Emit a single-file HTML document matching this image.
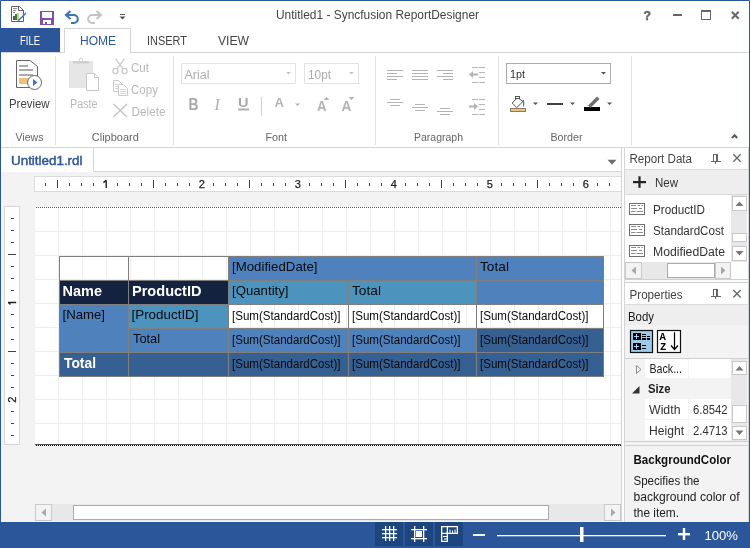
<!DOCTYPE html>
<html><head><meta charset="utf-8"><title>ReportDesigner</title>
<style>html,body{margin:0;padding:0;width:750px;height:548px;overflow:hidden;background:#fff}svg{display:block;will-change:transform}text{font-family:"Liberation Sans",sans-serif}</style>
</head><body>
<svg width="750" height="548" viewBox="0 0 750 548" shape-rendering="auto">
<rect x="0" y="0" width="750" height="548" fill="#fff"/>
<text x="276" y="19" font-size="12" fill="#444" textLength="203" lengthAdjust="spacingAndGlyphs">Untitled1 - Syncfusion ReportDesigner</text>
<g fill="none" stroke="#5f5f5f" stroke-width="1">
<path d="M11.5 6.5 H19.5 L23.5 10.5 V21.5 H11.5 Z"/>
<path d="M18.5 6.5 V10.5 H23.5"/>
</g>
<g fill="#8a8a8a"><rect x="13" y="8" width="4" height="1"/><rect x="13" y="10" width="3" height="1"/><rect x="13" y="12" width="2" height="1"/></g>
<rect x="13" y="16" width="2" height="4" fill="#595959"/>
<rect x="15" y="14" width="2" height="6" fill="#1e8c45"/>
<rect x="17" y="13" width="2" height="7" fill="#f2bf6f"/>
<path d="M18 21 L26 13" stroke="#3b7bc8" stroke-width="1.6"/>

<rect x="40" y="11" width="14" height="14" fill="#8350a5"/>
<rect x="42" y="12" width="10" height="6" fill="#fff"/>
<rect x="43" y="20" width="8" height="4" fill="#fff"/>
<rect x="45" y="22" width="2" height="2" fill="#8350a5"/>
<path d="M70.5 11 L66 15 L70.5 19 M66.5 15 H73.8 A4 4 0 0 1 73.8 23 H71" fill="none" stroke="#3a74b4" stroke-width="2.1"/>
<path d="M96.5 11 L101 15 L96.5 19 M100.5 15 H92.2 A4 4 0 0 0 92.2 23 H95" fill="none" stroke="#c4c4c4" stroke-width="2.1"/>
<rect x="120" y="14" width="5" height="1" fill="#555"/>
<path d="M119.5 16.5 H125.5 L122.5 19.5 Z" fill="#555"/>
<text x="643.5" y="20" font-size="13.5" fill="#666" textLength="7.5" lengthAdjust="spacingAndGlyphs" font-weight="bold" stroke="#666" stroke-width="0.5">?</text>
<rect x="673" y="14" width="9" height="2" fill="#666"/>
<rect x="701.5" y="10.5" width="9" height="9" fill="none" stroke="#666"/><rect x="701" y="10" width="10" height="2" fill="#666"/>
<path d="M731.8 11.8 L738.7 18.7 M738.7 11.8 L731.8 18.7" stroke="#666" stroke-width="2"/>
<rect x="1" y="28" width="59" height="25" fill="#2b579a"/>
<text x="20" y="45" font-size="12" fill="#fff" textLength="20" lengthAdjust="spacingAndGlyphs">FILE</text>
<path d="M64.5 53 V28.5 H130.5 V53" fill="#fff" stroke="#d5d5d5"/>
<text x="80" y="45" font-size="12" fill="#2b579a" textLength="36" lengthAdjust="spacingAndGlyphs">HOME</text>
<text x="147" y="45" font-size="12" fill="#444" textLength="40" lengthAdjust="spacingAndGlyphs">INSERT</text>
<text x="218" y="45" font-size="12" fill="#444" textLength="31" lengthAdjust="spacingAndGlyphs">VIEW</text>
<rect x="1" y="52" width="64" height="1" fill="#d5d5d5"/>
<rect x="130" y="52" width="619" height="1" fill="#d5d5d5"/>
<rect x="1" y="147" width="748" height="1" fill="#d5d5d5"/>
<rect x="55" y="56" width="1" height="89" fill="#e1e1e1"/>
<rect x="173" y="56" width="1" height="89" fill="#e1e1e1"/>
<rect x="375" y="56" width="1" height="89" fill="#e1e1e1"/>
<rect x="498" y="56" width="1" height="89" fill="#e1e1e1"/>
<rect x="631" y="56" width="1" height="89" fill="#e1e1e1"/>
<text x="15.5" y="141" font-size="11.5" fill="#666" textLength="28" lengthAdjust="spacingAndGlyphs">Views</text>
<text x="91.8" y="141" font-size="11.5" fill="#666" textLength="47" lengthAdjust="spacingAndGlyphs">Clipboard</text>
<text x="265.5" y="141" font-size="11.5" fill="#666" textLength="21.5" lengthAdjust="spacingAndGlyphs">Font</text>
<text x="414" y="141" font-size="11.5" fill="#666" textLength="49" lengthAdjust="spacingAndGlyphs">Paragraph</text>
<text x="550.5" y="141" font-size="11.5" fill="#666" textLength="32" lengthAdjust="spacingAndGlyphs">Border</text>
<path d="M732 138 L734.6 135.3 L737.2 138" fill="none" stroke="#5a5a5a" stroke-width="2.1"/>
<path d="M16.5 60.5 H30 L37.5 66.5 V87.5 H16.5 Z" fill="#fff" stroke="#666"/>
<g fill="#ababab"><rect x="19" y="65" width="9" height="2"/><rect x="19" y="69" width="14" height="2"/><rect x="19" y="74" width="14" height="2"/></g>
<rect x="19" y="78" width="10" height="6" fill="#efc27c"/>
<circle cx="34.5" cy="82.5" r="7" fill="#fff" stroke="#666"/>
<path d="M33 79 L37.5 82.5 L33 86 Z" fill="#3b78b8"/>
<text x="9" y="108" font-size="12" fill="#444" textLength="40.5" lengthAdjust="spacingAndGlyphs">Preview</text>
<rect x="69" y="61" width="24" height="27" fill="#e6e6e6"/>
<rect x="73" y="61" width="16" height="2.5" fill="#cfcfcf"/>
<circle cx="81" cy="60" r="1.8" fill="none" stroke="#cfcfcf"/>
<path d="M86.5 73.5 H94.5 L98.5 77.5 V90.5 H86.5 Z" fill="#fff" stroke="#c8c8c8"/>
<path d="M94.5 73.5 V77.5 H98.5" fill="none" stroke="#c8c8c8"/>
<text x="70" y="108" font-size="12" fill="#b9b9b9" textLength="27.5" lengthAdjust="spacingAndGlyphs">Paste</text>
<g fill="none" stroke="#c8c8c8" stroke-width="1.2">
<circle cx="115.5" cy="71" r="2.6"/><circle cx="124.5" cy="71" r="2.6"/>
<path d="M117 68.8 L124.5 58.5 M123 68.8 L115.5 58.5"/></g>
<text x="131" y="72" font-size="12" fill="#b9b9b9" textLength="18" lengthAdjust="spacingAndGlyphs">Cut</text>
<g fill="#fff" stroke="#cacaca" stroke-width="1">
<path d="M113.5 80.5 H118.5 L121.5 83.5 V91.5 H113.5 Z"/>
<path d="M118.5 84.5 H123.5 L127.5 88.5 V95.5 H118.5 Z"/></g>
<g fill="#d8d8d8"><rect x="115" y="84" width="4" height="1"/><rect x="115" y="86" width="3" height="1"/><rect x="115" y="88" width="3" height="1"/>
<rect x="120" y="89" width="6" height="1"/><rect x="120" y="91" width="6" height="1"/><rect x="120" y="93" width="6" height="1"/></g>
<text x="131" y="93.5" font-size="12" fill="#b9b9b9" textLength="27" lengthAdjust="spacingAndGlyphs">Copy</text>
<path d="M113.5 104 L127 117 M127 104 L113.5 117" stroke="#c4c4c4" stroke-width="1.4"/>
<text x="131.5" y="116" font-size="12" fill="#b9b9b9" textLength="34" lengthAdjust="spacingAndGlyphs">Delete</text>
<rect x="181.5" y="63.5" width="114" height="20" fill="#fff" stroke="#e3e3e3" stroke-width="1"/>
<text x="184.5" y="79" font-size="12" fill="#adadad" textLength="25" lengthAdjust="spacingAndGlyphs">Arial</text>
<path d="M286 72 H291 L288.5 74.5 Z" fill="#c6c6c6"/>
<rect x="304.5" y="63.5" width="54" height="20" fill="#fff" stroke="#e3e3e3" stroke-width="1"/>
<text x="308" y="79" font-size="12" fill="#adadad" textLength="23" lengthAdjust="spacingAndGlyphs">10pt</text>
<path d="M349 72 H354 L351.5 74.5 Z" fill="#c6c6c6"/>
<text x="188.5" y="109.6" font-size="16.5" fill="#a9a9a9" textLength="10" lengthAdjust="spacingAndGlyphs" font-weight="bold">B</text>
<text x="214.5" y="109.5" font-size="16" fill="#b0b0b0" style="font-family:Liberation Serif;font-style:italic">I</text>
<text x="238" y="107" font-size="13.5" fill="#a9a9a9" textLength="10.5" lengthAdjust="spacingAndGlyphs" font-weight="bold">U</text>
<rect x="238" y="108.5" width="11" height="2" fill="#b0b0b0"/>
<rect x="261" y="97" width="1" height="19" fill="#d0d0d0"/>
<text x="274.5" y="106.8" font-size="13.5" fill="#b4b4b4" textLength="9.5" lengthAdjust="spacingAndGlyphs" font-weight="bold">A</text>
<path d="M295 103.5 H300 L297.5 106 Z" fill="#b0b0b0"/>
<text x="317" y="111" font-size="14.5" fill="#b4b4b4" textLength="9.5" lengthAdjust="spacingAndGlyphs" font-weight="bold">A</text>
<path d="M323.5 100 L326.5 97 L329.5 100 Z" fill="#b4b4b4"/>
<text x="341.5" y="111" font-size="14.5" fill="#b4b4b4" textLength="10" lengthAdjust="spacingAndGlyphs" font-weight="bold">A</text>
<path d="M348.5 97 L351.5 100 L354.5 97 Z" fill="#b4b4b4"/>
<rect x="387" y="70" width="16" height="1" fill="#b4b4b4"/>
<rect x="387" y="73" width="10" height="1" fill="#b4b4b4"/>
<rect x="387" y="76" width="16" height="1" fill="#b4b4b4"/>
<rect x="387" y="79" width="10" height="1" fill="#b4b4b4"/>
<rect x="412" y="70" width="16" height="1" fill="#b4b4b4"/>
<rect x="412" y="73" width="16" height="1" fill="#b4b4b4"/>
<rect x="412" y="76" width="16" height="1" fill="#b4b4b4"/>
<rect x="412" y="79" width="16" height="1" fill="#b4b4b4"/>
<rect x="437" y="70" width="16" height="1" fill="#b4b4b4"/>
<rect x="443" y="73" width="10" height="1" fill="#b4b4b4"/>
<rect x="437" y="76" width="16" height="1" fill="#b4b4b4"/>
<rect x="443" y="79" width="10" height="1" fill="#b4b4b4"/>
<rect x="390" y="99" width="10" height="1" fill="#b4b4b4"/>
<rect x="387" y="102" width="16" height="1" fill="#b4b4b4"/>
<rect x="390" y="105" width="10" height="1" fill="#b4b4b4"/>
<rect x="415" y="104" width="10" height="1" fill="#b4b4b4"/>
<rect x="412" y="107" width="16" height="1" fill="#b4b4b4"/>
<rect x="415" y="110" width="10" height="1" fill="#b4b4b4"/>
<rect x="440" y="108" width="10" height="1" fill="#b4b4b4"/>
<rect x="437" y="111" width="16" height="1" fill="#b4b4b4"/>
<rect x="440" y="114" width="10" height="1" fill="#b4b4b4"/>
<rect x="472" y="67" width="6" height="1" fill="#b4b4b4"/>
<rect x="479" y="67" width="6" height="1" fill="#b4b4b4"/>
<rect x="479" y="72" width="6" height="1" fill="#b4b4b4"/>
<rect x="479" y="77" width="6" height="1" fill="#b4b4b4"/>
<rect x="472" y="82" width="6" height="1" fill="#b4b4b4"/>
<rect x="479" y="82" width="6" height="1" fill="#b4b4b4"/>
<path d="M469 74.5 L473 71 V73.5 H478 V75.5 H473 V78 Z" fill="#b4b4b4"/>
<rect x="472" y="99" width="6" height="1" fill="#b4b4b4"/>
<rect x="479" y="99" width="6" height="1" fill="#b4b4b4"/>
<rect x="479" y="104" width="6" height="1" fill="#b4b4b4"/>
<rect x="479" y="109" width="6" height="1" fill="#b4b4b4"/>
<rect x="472" y="114" width="6" height="1" fill="#b4b4b4"/>
<rect x="479" y="114" width="6" height="1" fill="#b4b4b4"/>
<path d="M478 106.5 L474 103 V105.5 H469 V107.5 H474 V110 Z" fill="#b4b4b4"/>
<rect x="506.5" y="63.5" width="104" height="20" fill="#fff" stroke="#ababab" stroke-width="1"/>
<text x="510" y="78" font-size="11.5" fill="#333" textLength="15" lengthAdjust="spacingAndGlyphs">1pt</text>
<path d="M601 72 H606 L603.5 74.5 Z" fill="#555"/>
<rect x="510.5" y="108.5" width="15" height="3" fill="#f0c27a" stroke="#8a7a66"/>
<path d="M512.2 103 L517.5 97.5 L523 101.5 L516.7 107.6 Z" fill="#fff" stroke="#555"/>
<rect x="515.5" y="96.5" width="4" height="2" fill="#fff" stroke="#555"/>
<path d="M523 100 Q524 101 523.5 106.5" fill="none" stroke="#3b7bc8" stroke-width="1.3"/>
<path d="M533 102.5 H538 L535.5 105 Z" fill="#555"/>
<rect x="547" y="103" width="16" height="2" fill="#444"/>
<path d="M570 102.5 H575 L572.5 105 Z" fill="#555"/>
<rect x="584" y="107" width="16" height="4" fill="#000"/>
<path d="M588 105.5 L597 96.5 L599.5 99 L590.5 108 Z" fill="#707070"/>
<path d="M586 106 L588 105.5 L588.5 106" fill="#707070"/>
<path d="M607 102.5 H612 L609.5 105 Z" fill="#555"/>
<rect x="93" y="148" width="1" height="24" fill="#d5d5d5"/>
<rect x="93" y="171" width="529" height="1" fill="#d5d5d5"/>
<rect x="621" y="148" width="1" height="24" fill="#d5d5d5"/>
<text x="11" y="165" font-size="13" fill="#2b579a" textLength="71.5" lengthAdjust="spacingAndGlyphs" stroke="#2b579a" stroke-width="0.45">Untitled1.rdl</text>
<path d="M607.5 159.7 H616.5 L612 164.7 Z" fill="#707070"/>
<rect x="1" y="172" width="622" height="350" fill="#f3f3f3"/>
<rect x="622" y="148" width="2" height="374" fill="#fff"/>
<rect x="34" y="176" width="588" height="16" fill="#fff"/>
<rect x="34" y="176" width="588" height="1" fill="#dcdcdc"/>
<rect x="34" y="191" width="588" height="1" fill="#dcdcdc"/>
<rect x="34" y="176" width="1" height="16" fill="#dcdcdc"/>
<rect x="45" y="183" width="1" height="3" fill="#444"/>
<rect x="57" y="180" width="1" height="8" fill="#444"/>
<rect x="69" y="183" width="1" height="3" fill="#444"/>
<rect x="81" y="183" width="1" height="3" fill="#444"/>
<rect x="93" y="183" width="1" height="3" fill="#444"/>
<path d="M106.2 180.3 V188 M103.4 182.6 L106.2 180.3" fill="none" stroke="#222" stroke-width="1.4"/>
<rect x="117" y="183" width="1" height="3" fill="#444"/>
<rect x="129" y="183" width="1" height="3" fill="#444"/>
<rect x="141" y="183" width="1" height="3" fill="#444"/>
<rect x="153" y="180" width="1" height="8" fill="#444"/>
<rect x="165" y="183" width="1" height="3" fill="#444"/>
<rect x="177" y="183" width="1" height="3" fill="#444"/>
<rect x="189" y="183" width="1" height="3" fill="#444"/>
<text x="201.7" y="188" font-size="11" fill="#222" text-anchor="middle" stroke="#222" stroke-width="0.25">2</text>
<rect x="213" y="183" width="1" height="3" fill="#444"/>
<rect x="225" y="183" width="1" height="3" fill="#444"/>
<rect x="237" y="183" width="1" height="3" fill="#444"/>
<rect x="249" y="180" width="1" height="8" fill="#444"/>
<rect x="261" y="183" width="1" height="3" fill="#444"/>
<rect x="273" y="183" width="1" height="3" fill="#444"/>
<rect x="285" y="183" width="1" height="3" fill="#444"/>
<text x="297.7" y="188" font-size="11" fill="#222" text-anchor="middle" stroke="#222" stroke-width="0.25">3</text>
<rect x="309" y="183" width="1" height="3" fill="#444"/>
<rect x="321" y="183" width="1" height="3" fill="#444"/>
<rect x="333" y="183" width="1" height="3" fill="#444"/>
<rect x="345" y="180" width="1" height="8" fill="#444"/>
<rect x="357" y="183" width="1" height="3" fill="#444"/>
<rect x="369" y="183" width="1" height="3" fill="#444"/>
<rect x="381" y="183" width="1" height="3" fill="#444"/>
<text x="393.7" y="188" font-size="11" fill="#222" text-anchor="middle" stroke="#222" stroke-width="0.25">4</text>
<rect x="405" y="183" width="1" height="3" fill="#444"/>
<rect x="417" y="183" width="1" height="3" fill="#444"/>
<rect x="429" y="183" width="1" height="3" fill="#444"/>
<rect x="441" y="180" width="1" height="8" fill="#444"/>
<rect x="453" y="183" width="1" height="3" fill="#444"/>
<rect x="465" y="183" width="1" height="3" fill="#444"/>
<rect x="477" y="183" width="1" height="3" fill="#444"/>
<text x="489.7" y="188" font-size="11" fill="#222" text-anchor="middle" stroke="#222" stroke-width="0.25">5</text>
<rect x="501" y="183" width="1" height="3" fill="#444"/>
<rect x="513" y="183" width="1" height="3" fill="#444"/>
<rect x="525" y="183" width="1" height="3" fill="#444"/>
<rect x="537" y="180" width="1" height="8" fill="#444"/>
<rect x="549" y="183" width="1" height="3" fill="#444"/>
<rect x="561" y="183" width="1" height="3" fill="#444"/>
<rect x="573" y="183" width="1" height="3" fill="#444"/>
<text x="585.7" y="188" font-size="11" fill="#222" text-anchor="middle" stroke="#222" stroke-width="0.25">6</text>
<rect x="597" y="183" width="1" height="3" fill="#444"/>
<rect x="609" y="183" width="1" height="3" fill="#444"/>
<rect x="4" y="206" width="16" height="239" fill="#fff"/>
<rect x="4.5" y="206.5" width="15" height="238" fill="none" stroke="#d8d8d8" stroke-width="1"/>
<rect x="11" y="218" width="3" height="1" fill="#444"/>
<rect x="11" y="230" width="3" height="1" fill="#444"/>
<rect x="11" y="242" width="3" height="1" fill="#444"/>
<rect x="8" y="254" width="8" height="1" fill="#444"/>
<rect x="11" y="266" width="3" height="1" fill="#444"/>
<rect x="11" y="278" width="3" height="1" fill="#444"/>
<rect x="11" y="290" width="3" height="1" fill="#444"/>
<path d="M8 302.5 H16.2 M8.3 302.6 L10.5 304.6" fill="none" stroke="#222" stroke-width="1.3"/>
<rect x="11" y="314" width="3" height="1" fill="#444"/>
<rect x="11" y="327" width="3" height="1" fill="#444"/>
<rect x="11" y="339" width="3" height="1" fill="#444"/>
<rect x="8" y="351" width="8" height="1" fill="#444"/>
<rect x="11" y="363" width="3" height="1" fill="#444"/>
<rect x="11" y="375" width="3" height="1" fill="#444"/>
<rect x="11" y="387" width="3" height="1" fill="#444"/>
<text x="0" y="0" font-size="11" fill="#222" text-anchor="middle" stroke="#222" stroke-width="0.25" transform="translate(16 399.7) rotate(-90)">2</text>
<rect x="11" y="411" width="3" height="1" fill="#444"/>
<rect x="11" y="423" width="3" height="1" fill="#444"/>
<rect x="11" y="435" width="3" height="1" fill="#444"/>
<rect x="35" y="207" width="587" height="238" fill="#fff"/>
<rect x="58" y="208" width="1" height="236" fill="#ededed"/>
<rect x="82" y="208" width="1" height="236" fill="#ededed"/>
<rect x="106" y="208" width="1" height="236" fill="#ededed"/>
<rect x="130" y="208" width="1" height="236" fill="#ededed"/>
<rect x="154" y="208" width="1" height="236" fill="#ededed"/>
<rect x="178" y="208" width="1" height="236" fill="#ededed"/>
<rect x="202" y="208" width="1" height="236" fill="#ededed"/>
<rect x="226" y="208" width="1" height="236" fill="#ededed"/>
<rect x="250" y="208" width="1" height="236" fill="#ededed"/>
<rect x="274" y="208" width="1" height="236" fill="#ededed"/>
<rect x="298" y="208" width="1" height="236" fill="#ededed"/>
<rect x="322" y="208" width="1" height="236" fill="#ededed"/>
<rect x="346" y="208" width="1" height="236" fill="#ededed"/>
<rect x="370" y="208" width="1" height="236" fill="#ededed"/>
<rect x="394" y="208" width="1" height="236" fill="#ededed"/>
<rect x="418" y="208" width="1" height="236" fill="#ededed"/>
<rect x="442" y="208" width="1" height="236" fill="#ededed"/>
<rect x="466" y="208" width="1" height="236" fill="#ededed"/>
<rect x="490" y="208" width="1" height="236" fill="#ededed"/>
<rect x="514" y="208" width="1" height="236" fill="#ededed"/>
<rect x="538" y="208" width="1" height="236" fill="#ededed"/>
<rect x="562" y="208" width="1" height="236" fill="#ededed"/>
<rect x="586" y="208" width="1" height="236" fill="#ededed"/>
<rect x="610" y="208" width="1" height="236" fill="#ededed"/>
<rect x="35" y="231" width="587" height="1" fill="#ededed"/>
<rect x="35" y="255" width="587" height="1" fill="#ededed"/>
<rect x="35" y="279" width="587" height="1" fill="#ededed"/>
<rect x="35" y="303" width="587" height="1" fill="#ededed"/>
<rect x="35" y="327" width="587" height="1" fill="#ededed"/>
<rect x="35" y="351" width="587" height="1" fill="#ededed"/>
<rect x="35" y="375" width="587" height="1" fill="#ededed"/>
<rect x="35" y="399" width="587" height="1" fill="#ededed"/>
<rect x="35" y="423" width="587" height="1" fill="#ededed"/>
<line x1="36" y1="207.5" x2="622" y2="207.5" stroke="#5a5a5a" stroke-dasharray="1 1"/>
<rect x="35" y="444" width="586" height="1" fill="#505050"/>
<line x1="36" y1="445.5" x2="621" y2="445.5" stroke="#000" stroke-dasharray="1 1"/>
<rect x="621" y="148" width="1" height="374" fill="#d5d5d5"/>
<rect x="228" y="256" width="248" height="24" fill="#4f81bd"/>
<rect x="476" y="256" width="127" height="48" fill="#4f81bd"/>
<rect x="59" y="280" width="69" height="24" fill="#13233f"/>
<rect x="128" y="280" width="100" height="24" fill="#13233f"/>
<rect x="228" y="280" width="120" height="24" fill="#4c93bd"/>
<rect x="348" y="280" width="128" height="24" fill="#4c93bd"/>
<rect x="59" y="304" width="69" height="48" fill="#4f81bd"/>
<rect x="128" y="304" width="100" height="24" fill="#4c93bd"/>
<rect x="128" y="328" width="100" height="24" fill="#4f81bd"/>
<rect x="228" y="328" width="120" height="24" fill="#4f81bd"/>
<rect x="348" y="328" width="128" height="24" fill="#4f81bd"/>
<rect x="476" y="328" width="127" height="24" fill="#366092"/>
<rect x="59" y="352" width="544" height="24" fill="#366092"/>
<g fill="none" stroke="#7f7f7f" stroke-width="1">
<rect x="59.5" y="256.5" width="544" height="120"/>
</g>
<rect x="59" y="280" width="545" height="1" fill="#7f7f7f"/>
<rect x="59" y="304" width="545" height="1" fill="#7f7f7f"/>
<rect x="128" y="328" width="476" height="1" fill="#7f7f7f"/>
<rect x="59" y="352" width="545" height="1" fill="#7f7f7f"/>
<rect x="128" y="256" width="1" height="121" fill="#7f7f7f"/>
<rect x="228" y="256" width="1" height="121" fill="#7f7f7f"/>
<rect x="348" y="280" width="1" height="97" fill="#7f7f7f"/>
<rect x="476" y="256" width="1" height="121" fill="#7f7f7f"/>
<text x="232" y="270.5" font-size="13" fill="#0a0a0a" textLength="85.5" lengthAdjust="spacingAndGlyphs">[ModifiedDate]</text>
<text x="480" y="270.5" font-size="13" fill="#0a0a0a" textLength="29" lengthAdjust="spacingAndGlyphs">Total</text>
<text x="62.5" y="295.5" font-size="14" fill="#fff" textLength="39.5" lengthAdjust="spacingAndGlyphs" font-weight="bold">Name</text>
<text x="132" y="295.5" font-size="14" fill="#fff" textLength="69.5" lengthAdjust="spacingAndGlyphs" font-weight="bold">ProductID</text>
<text x="232" y="294.5" font-size="13" fill="#0a0a0a" textLength="56.5" lengthAdjust="spacingAndGlyphs">[Quantity]</text>
<text x="352" y="294.5" font-size="13" fill="#0a0a0a" textLength="29" lengthAdjust="spacingAndGlyphs">Total</text>
<text x="62.5" y="318.6" font-size="13" fill="#0a0a0a" textLength="42.5" lengthAdjust="spacingAndGlyphs">[Name]</text>
<text x="131.5" y="318.6" font-size="13" fill="#0a0a0a" textLength="67" lengthAdjust="spacingAndGlyphs">[ProductID]</text>
<text x="232" y="319.8" font-size="12" fill="#0a0a0a" textLength="108.5" lengthAdjust="spacingAndGlyphs">[Sum(StandardCost)]</text>
<text x="232" y="343.8" font-size="12" fill="#0a0a0a" textLength="108.5" lengthAdjust="spacingAndGlyphs">[Sum(StandardCost)]</text>
<text x="232" y="367.8" font-size="12" fill="#0a0a0a" textLength="108.5" lengthAdjust="spacingAndGlyphs">[Sum(StandardCost)]</text>
<text x="352" y="319.8" font-size="12" fill="#0a0a0a" textLength="108.5" lengthAdjust="spacingAndGlyphs">[Sum(StandardCost)]</text>
<text x="352" y="343.8" font-size="12" fill="#0a0a0a" textLength="108.5" lengthAdjust="spacingAndGlyphs">[Sum(StandardCost)]</text>
<text x="352" y="367.8" font-size="12" fill="#0a0a0a" textLength="108.5" lengthAdjust="spacingAndGlyphs">[Sum(StandardCost)]</text>
<text x="480" y="319.8" font-size="12" fill="#0a0a0a" textLength="108.5" lengthAdjust="spacingAndGlyphs">[Sum(StandardCost)]</text>
<text x="480" y="343.8" font-size="12" fill="#0a0a0a" textLength="108.5" lengthAdjust="spacingAndGlyphs">[Sum(StandardCost)]</text>
<text x="480" y="367.8" font-size="12" fill="#0a0a0a" textLength="108.5" lengthAdjust="spacingAndGlyphs">[Sum(StandardCost)]</text>
<text x="133" y="342.6" font-size="13" fill="#0a0a0a" textLength="27" lengthAdjust="spacingAndGlyphs">Total</text>
<text x="64" y="368" font-size="14.5" fill="#fff" textLength="32" lengthAdjust="spacingAndGlyphs" font-weight="bold">Total</text>
<rect x="35" y="504" width="586" height="17" fill="#e8e8e8"/>
<rect x="35.5" y="504.5" width="16" height="16" fill="#f3f3f3" stroke="#c8c8c8" stroke-width="1"/>
<path d="M46 508.5 V516.5 L41.5 512.5 Z" fill="#a8a8a8"/>
<rect x="73.5" y="505.5" width="475" height="14" fill="#fff" stroke="#ababab" stroke-width="1"/>
<rect x="604.5" y="504.5" width="16" height="16" fill="#f3f3f3" stroke="#c8c8c8" stroke-width="1"/>
<path d="M611 508.5 V516.5 L615.5 512.5 Z" fill="#a8a8a8"/>
<rect x="624" y="148" width="125" height="374" fill="#f3f3f3"/>
<rect x="624" y="148" width="1" height="374" fill="#d5d5d5"/>
<rect x="625" y="148" width="123" height="21" fill="#fff"/>
<rect x="625" y="169" width="124" height="1" fill="#dcdcdc"/>
<text x="629.5" y="163" font-size="12" fill="#444" textLength="62.5" lengthAdjust="spacingAndGlyphs">Report Data</text>
<g fill="#666"><rect x="713" y="154" width="5" height="1"/><rect x="713" y="154" width="1" height="7"/><rect x="716" y="154" width="2" height="7"/><rect x="711" y="161" width="10" height="1"/><rect x="715" y="162" width="1" height="2"/></g>
<path d="M733.3 154.3 L740.7 161.8 M740.7 154.3 L733.3 161.8" stroke="#666" stroke-width="1.3"/>
<rect x="625" y="170" width="123" height="24" fill="#eeeeee"/>
<rect x="625" y="194" width="124" height="1" fill="#d9d9d9"/>
<rect x="633" y="181" width="13" height="2.2" fill="#222"/>
<rect x="638.4" y="176.3" width="2.2" height="11.5" fill="#222"/>
<text x="655" y="187" font-size="12" fill="#333" textLength="23" lengthAdjust="spacingAndGlyphs">New</text>
<rect x="625" y="195" width="123" height="85" fill="#fff"/>
<rect x="629.5" y="203.5" width="15" height="11" fill="#fff" stroke="#707070"/>
<path d="M631 205.5 H636 M637.5 205.5 H640 M641.5 205.5 H643 M631 208.5 H637 M639 208.5 H642 M631 211.5 H635.5 M636.5 211.5 H643" stroke="#8c8c8c"/>
<text x="653" y="214" font-size="12" fill="#333" textLength="52" lengthAdjust="spacingAndGlyphs">ProductID</text>
<rect x="629.5" y="224.5" width="15" height="11" fill="#fff" stroke="#707070"/>
<path d="M631 226.5 H636 M637.5 226.5 H640 M641.5 226.5 H643 M631 229.5 H637 M639 229.5 H642 M631 232.5 H635.5 M636.5 232.5 H643" stroke="#8c8c8c"/>
<text x="653" y="235" font-size="12" fill="#333" textLength="71" lengthAdjust="spacingAndGlyphs">StandardCost</text>
<rect x="629.5" y="245.5" width="15" height="11" fill="#fff" stroke="#707070"/>
<path d="M631 247.5 H636 M637.5 247.5 H640 M641.5 247.5 H643 M631 250.5 H637 M639 250.5 H642 M631 253.5 H635.5 M636.5 253.5 H643" stroke="#8c8c8c"/>
<text x="653" y="256" font-size="12" fill="#333" textLength="72" lengthAdjust="spacingAndGlyphs">ModifiedDate</text>
<rect x="731" y="195" width="16" height="67" fill="#e8e8e8"/>
<rect x="732.5" y="196.5" width="14" height="14" fill="#fff" stroke="#c8c8c8" stroke-width="1"/>
<path d="M735.5 206 H743.5 L739.5 201.5 Z" fill="#777"/>
<rect x="732.5" y="233.5" width="14" height="8" fill="#fff" stroke="#c8c8c8" stroke-width="1"/>
<rect x="732.5" y="246.5" width="14" height="14" fill="#fff" stroke="#c8c8c8" stroke-width="1"/>
<path d="M735.5 251 H743.5 L739.5 255.5 Z" fill="#777"/>
<rect x="625" y="262" width="106" height="17" fill="#e8e8e8"/>
<rect x="625.5" y="262.5" width="16" height="16" fill="#f3f3f3" stroke="#c8c8c8" stroke-width="1"/>
<path d="M636 266.5 V274.5 L631.5 270.5 Z" fill="#a8a8a8"/>
<rect x="667.5" y="263.5" width="47" height="14" fill="#fff" stroke="#ababab" stroke-width="1"/>
<rect x="715.5" y="262.5" width="15" height="16" fill="#f3f3f3" stroke="#c8c8c8" stroke-width="1"/>
<path d="M721 266.5 V274.5 L725.5 270.5 Z" fill="#a8a8a8"/>
<rect x="625" y="279" width="124" height="1" fill="#d0d0d0"/>
<rect x="625" y="280" width="123" height="2" fill="#fbfbfb"/>
<rect x="625" y="282" width="124" height="1" fill="#d0d0d0"/>
<rect x="625" y="283" width="123" height="21" fill="#fff"/>
<rect x="625" y="304" width="124" height="1" fill="#dcdcdc"/>
<text x="629.5" y="299" font-size="12" fill="#444" textLength="53" lengthAdjust="spacingAndGlyphs">Properties</text>
<g fill="#666"><rect x="713" y="289" width="5" height="1"/><rect x="713" y="289" width="1" height="7"/><rect x="716" y="289" width="2" height="7"/><rect x="711" y="296" width="10" height="1"/><rect x="715" y="297" width="1" height="2"/></g>
<path d="M733.3 290 L740.7 297.5 M740.7 290 L733.3 297.5" stroke="#666" stroke-width="1.3"/>
<rect x="625" y="305" width="123" height="20" fill="#eeeeee"/>
<text x="628" y="320.5" font-size="12" fill="#1a1a1a" textLength="26" lengthAdjust="spacingAndGlyphs">Body</text>
<rect x="625" y="325" width="123" height="33" fill="#f3f3f3"/>
<rect x="630.5" y="330.5" width="22" height="22" fill="#9ecbec" stroke="#111" stroke-width="1.2"/>
<rect x="633" y="333" width="8" height="7" fill="#000"/><rect x="633" y="343" width="8" height="7" fill="#000"/>
<g fill="#a8d4f4"><rect x="636" y="334" width="1" height="5"/><rect x="634" y="336" width="5" height="1"/><rect x="636" y="344" width="1" height="5"/><rect x="634" y="346" width="5" height="1"/></g>
<g fill="#000"><rect x="642" y="334" width="4" height="1"/><rect x="642" y="336" width="4" height="1"/><rect x="647" y="336" width="3" height="1"/>
<rect x="642" y="338" width="4" height="2"/><rect x="647" y="338" width="3" height="2"/>
<rect x="642" y="345" width="4" height="1"/><rect x="642" y="348" width="4" height="1"/></g>
<rect x="657.5" y="330.5" width="23" height="22" fill="#fff" stroke="#111" stroke-width="1.2"/>
<text x="659.6" y="339.6" font-size="10.5" fill="#000" font-weight="bold" style="font-family:Liberation Mono">A</text>
<text x="659.9" y="350" font-size="10.5" fill="#000" font-weight="bold" style="font-family:Liberation Mono">Z</text>
<path d="M674.5 332.3 V349.5 M671 345.5 L674.5 349.5 L678 345.5" fill="none" stroke="#000" stroke-width="1.2"/>
<rect x="625" y="358" width="124" height="1" fill="#d0d0d0"/>
<rect x="625" y="359" width="106" height="82" fill="#f3f3f3"/>
<rect x="645" y="359" width="43" height="19" fill="#fff"/>
<rect x="689" y="359" width="42" height="19" fill="#fff"/>
<path d="M636.5 365.5 L641 369.5 L636.5 373.5 Z" fill="#fff" stroke="#8a8a8a"/>
<text x="649.5" y="373" font-size="12" fill="#222" textLength="32.5" lengthAdjust="spacingAndGlyphs">Back...</text>
<path d="M632 393.5 L639.5 386 V393.5 Z" fill="#333"/>
<text x="648" y="393" font-size="12.5" fill="#222" textLength="22.5" lengthAdjust="spacingAndGlyphs" font-weight="bold">Size</text>
<rect x="645" y="399" width="43" height="20" fill="#fff"/>
<rect x="689" y="399" width="42" height="20" fill="#fff"/>
<rect x="645" y="420" width="43" height="20" fill="#fff"/>
<rect x="689" y="420" width="42" height="20" fill="#fff"/>
<text x="649" y="414" font-size="12" fill="#333" textLength="31.5" lengthAdjust="spacingAndGlyphs">Width</text>
<text x="693" y="414" font-size="12" fill="#333" textLength="34.5" lengthAdjust="spacingAndGlyphs">6.8542</text>
<text x="649" y="435" font-size="12" fill="#333" textLength="35" lengthAdjust="spacingAndGlyphs">Height</text>
<text x="693" y="435" font-size="12" fill="#333" textLength="34.5" lengthAdjust="spacingAndGlyphs">2.4713</text>
<rect x="731" y="359" width="16" height="82" fill="#e8e8e8"/>
<rect x="732.5" y="361.5" width="14" height="13" fill="#fff" stroke="#c8c8c8" stroke-width="1"/>
<path d="M735.5 370.5 H743.5 L739.5 366 Z" fill="#777"/>
<rect x="732.5" y="405.5" width="14" height="17" fill="#fff" stroke="#c8c8c8" stroke-width="1"/>
<rect x="732.5" y="426.5" width="14" height="13" fill="#fff" stroke="#c8c8c8" stroke-width="1"/>
<path d="M735.5 430.5 H743.5 L739.5 435 Z" fill="#777"/>
<rect x="625" y="441" width="124" height="1" fill="#d0d0d0"/>
<rect x="625" y="445" width="124" height="1" fill="#d0d0d0"/>
<rect x="625" y="446" width="123" height="76" fill="#f3f3f3"/>
<text x="633.5" y="464" font-size="12.5" fill="#111" textLength="97.5" lengthAdjust="spacingAndGlyphs" font-weight="bold">BackgroundColor</text>
<text x="633.5" y="485" font-size="12" fill="#222" textLength="66" lengthAdjust="spacingAndGlyphs">Specifies the</text>
<text x="633.5" y="501" font-size="12" fill="#222" textLength="106" lengthAdjust="spacingAndGlyphs">background color of</text>
<text x="633.5" y="517" font-size="12" fill="#222" textLength="45.5" lengthAdjust="spacingAndGlyphs">the item.</text>
<rect x="748" y="148" width="1" height="374" fill="#d5d5d5"/>
<rect x="0" y="522" width="750" height="26" fill="#2b579a"/>
<rect x="375" y="522" width="28" height="24" fill="#1d467e"/>
<rect x="405" y="522" width="28" height="24" fill="#1d467e"/>
<rect x="435" y="522" width="28" height="24" fill="#1d467e"/>
<g fill="#fff">
<rect x="385" y="526" width="1.3" height="15"/>
<rect x="389" y="526" width="1.3" height="15"/>
<rect x="393" y="526" width="1.3" height="15"/>
<rect x="382" y="529" width="15" height="1.3"/>
<rect x="382" y="533" width="15" height="1.3"/>
<rect x="382" y="537" width="15" height="1.3"/>
<rect x="414" y="526" width="1.3" height="16"/><rect x="423" y="526" width="1.3" height="16"/><rect x="411" y="529" width="16" height="1.3"/><rect x="411" y="538" width="16" height="1.3"/><rect x="416" y="531" width="6" height="6"/>
</g>
<g fill="none" stroke="#fff" stroke-width="1.3"><path d="M441.65 526.65 H457.35 V533.35 H447.35 V541.35 H441.65 Z"/><path d="M441.65 533.35 H447.35 V526.65"/></g>
<g fill="#fff"><rect x="449.5" y="529.5" width="1" height="4"/><rect x="452" y="530.5" width="1" height="3"/><rect x="454.5" y="529.5" width="1" height="4"/><rect x="443" y="536" width="4" height="1"/><rect x="444" y="538.5" width="3" height="1"/></g>
<rect x="473" y="534" width="12" height="2" fill="#fff"/>
<rect x="497" y="535" width="169" height="1.3" fill="#fff"/>
<rect x="580" y="527" width="3.5" height="15" fill="#fff"/>
<rect x="678" y="533" width="12" height="2.4" fill="#fff"/>
<rect x="682.8" y="528" width="2.4" height="12" fill="#fff"/>
<text x="704.5" y="540" font-size="13" fill="#fff" textLength="33.5" lengthAdjust="spacingAndGlyphs">100%</text>
<path d="M0.5 548 V0.5 H749.5 V548" fill="none" stroke="#2b579a"/>
</svg>
</body></html>
